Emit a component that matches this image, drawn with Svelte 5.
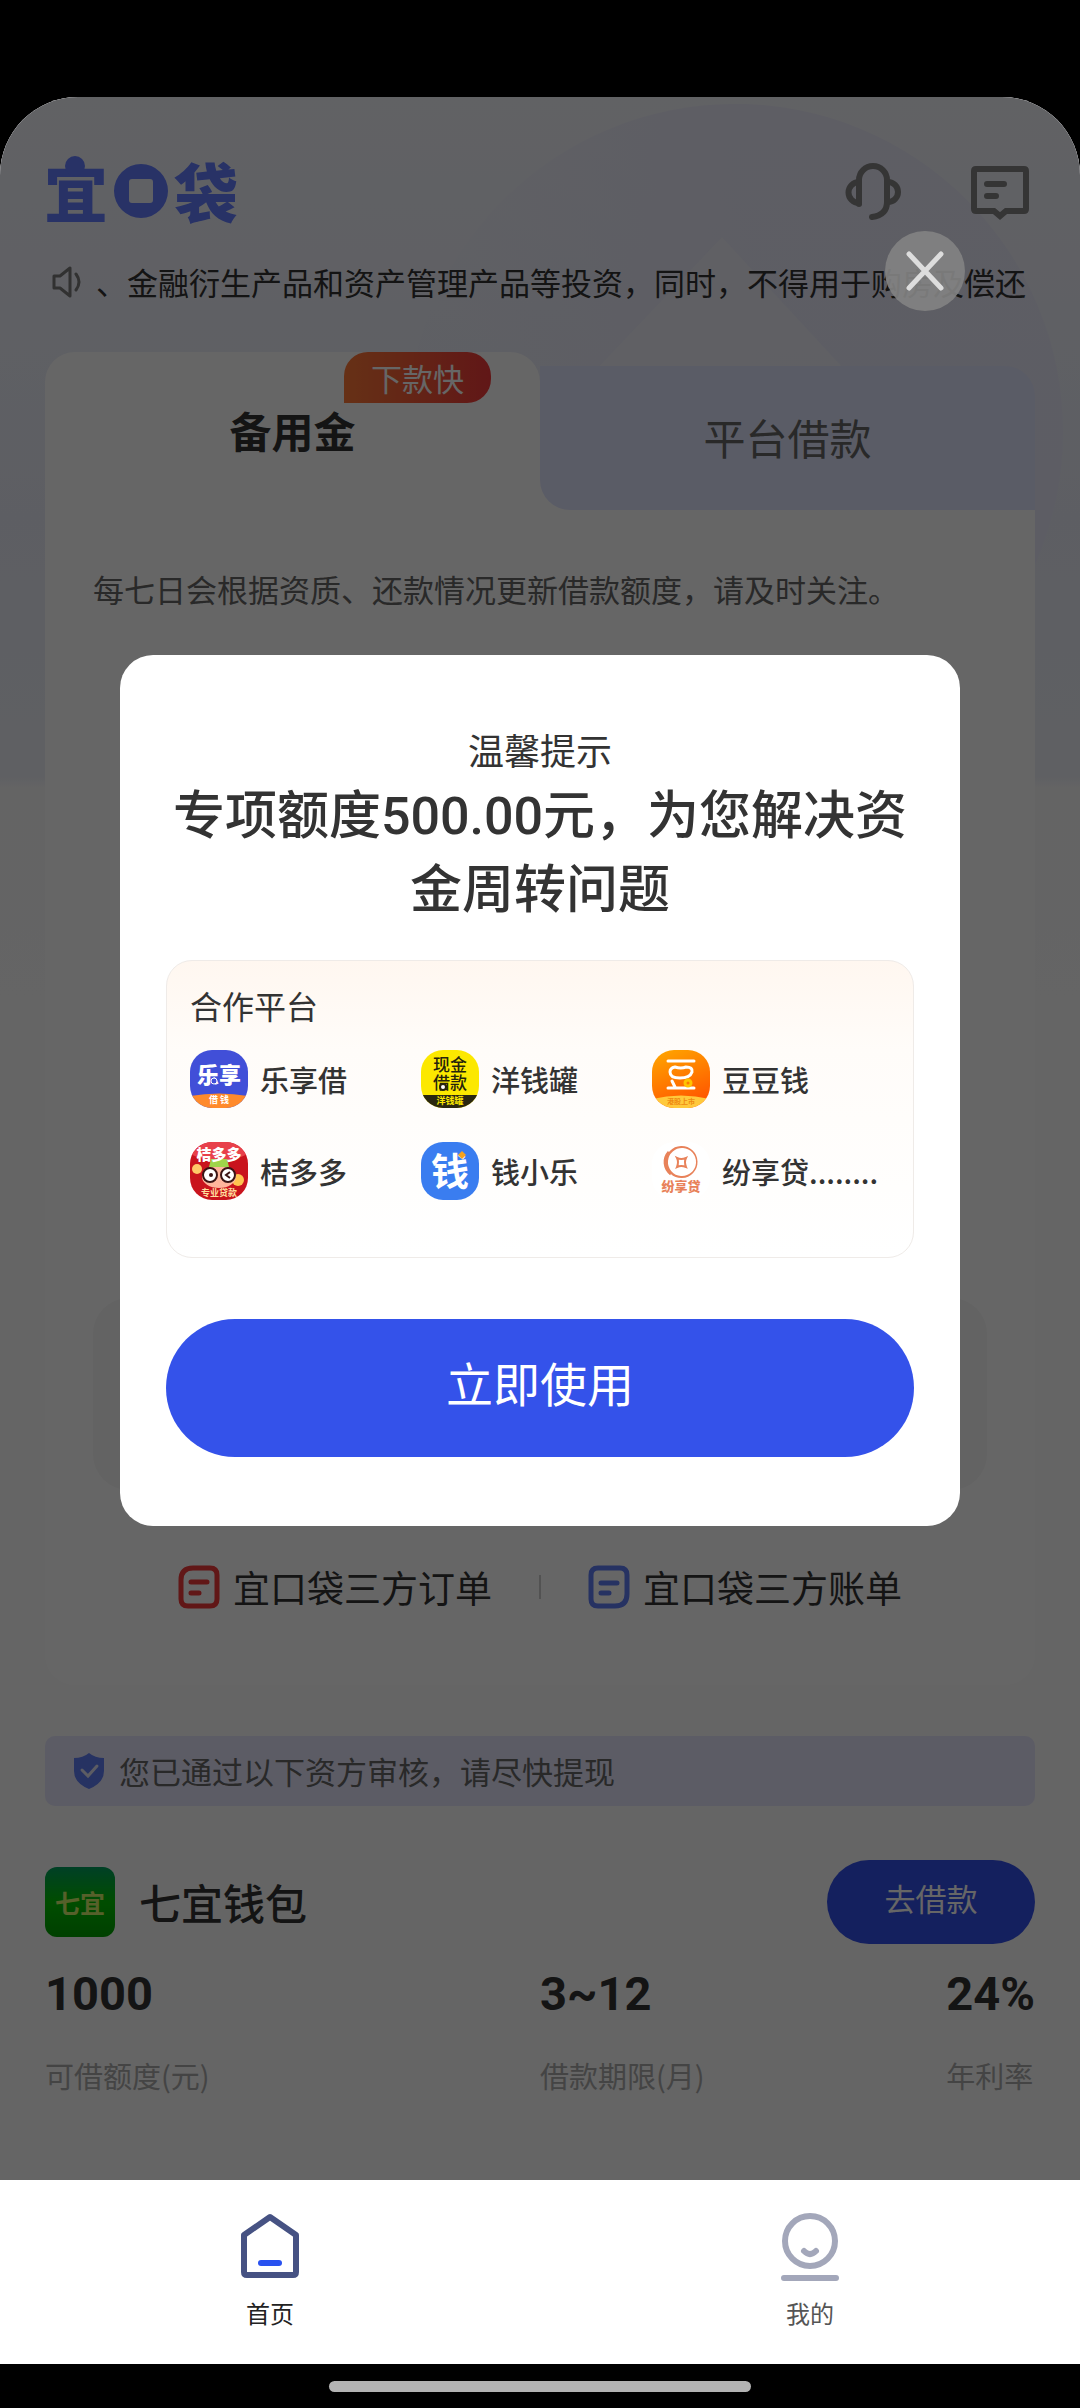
<script lang="ts">
	interface Stat {
		value: string;
		label: string;
	}

	const partners = [
		{ id: 'lexiang', name: '乐享借' },
		{ id: 'yangqian', name: '洋钱罐' },
		{ id: 'doudou', name: '豆豆钱' },
		{ id: 'jieduo', name: '桔多多' },
		{ id: 'xiaole', name: '钱小乐' },
		{ id: 'fenxiang', name: '纷享贷........' }
	];

	const stats: Stat[] = [
		{ value: '1000', label: '可借额度(元)' },
		{ value: '3~12', label: '借款期限(月)' },
		{ value: '24%', label: '年利率' }
	];

	let showDialog = $state(true);
	let activeTab = $state('reserve');

	function closeDialog() {
		showDialog = false;
	}
</script>

<div class="phone">
	<div class="screen">
		<main class="content">
			<svg class="backdrop" viewBox="0 0 1080 700" aria-hidden="true">
				<defs>
					<linearGradient id="halo" x1="0" y1="0.2" x2="1" y2="0">
						<stop offset="0" stop-color="#e8e8fa" stop-opacity="0.1" />
						<stop offset="0.5" stop-color="#e8e8fa" stop-opacity="0.8" />
						<stop offset="1" stop-color="#e8e8fa" stop-opacity="0.8" />
					</linearGradient>
				</defs>
				<circle cx="735" cy="335" r="328" fill="url(#halo)" />
				<path d="M722 140 870 300H570z" fill="#f1f2f9" fill-opacity="0.7" />
			</svg>

			<header class="header">
				<svg class="logo" viewBox="0 0 192 70" role="img" aria-label="宜口袋">
					<text class="logo-text" x="-1" y="61">宜</text>
					<circle cx="30" cy="10" r="10" />
					<path d="M96 8a27 27 0 1 0 0 54a27 27 0 1 0 0-54zM87 23h18q3 0 3 3v18q0 3-3 3H87q-3 0-3-3V26q0-3 3-3z" fill-rule="evenodd" />
					<text class="logo-text" x="129" y="61">袋</text>
				</svg>
				<div class="header-actions">
					<button type="button" class="icon-btn" aria-label="客服">
						<svg width="58" height="58" viewBox="0 0 58 58">
							<path d="M14 42V18a14 14 0 0 1 28 0v22q0 13-15 15" />
							<path d="M14 20a10 10 0 0 0 0 21M43 20a10 10 0 0 1 0 20" />
						</svg>
					</button>
					<button type="button" class="icon-btn" aria-label="消息">
						<svg width="58" height="58" viewBox="0 0 58 58">
							<path d="M5 7h48q2 0 2 2v38q0 2-2 2H35l-6 5-6-5H5q-2 0-2-2V9q0-2 2-2zM16 22h17M16 34h9" />
						</svg>
					</button>
				</div>
			</header>

			<div class="marquee">
				<svg width="32" height="32" viewBox="0 0 32 32" aria-hidden="true">
					<path d="M2 10h6l10-8v28l-10-8H2zM24 8q6 8 0 16" />
				</svg>
				<p class="marquee-text">、金融衍生产品和资产管理产品等投资，同时，不得用于购房及偿还</p>
			</div>

			<section class="loan-card">
				<div class="tabs">
					<button
						type="button"
						class="tab"
						class:tab-active={activeTab === 'reserve'}
						onclick={() => (activeTab = 'reserve')}
					>
						备用金
						<span class="tab-badge">下款快</span>
					</button>
					<button
						type="button"
						class="tab"
						class:tab-active={activeTab === 'platform'}
						onclick={() => (activeTab = 'platform')}
					>
						平台借款
					</button>
				</div>
				<p class="loan-tip">每七日会根据资质、还款情况更新借款额度，请及时关注。</p>
				<div class="loan-box"></div>
				<div class="loan-links">
					<a href="#orders">
						<svg class="order-icon" width="42" height="44" viewBox="0 0 42 44" aria-hidden="true">
							<path d="M15 3h17q7 0 7 7v24q0 7-7 7H10q-7 0-7-7V15Q3 3 15 3zM13 17h16M13 28h8" />
						</svg>
						宜口袋三方订单
					</a>
					<span class="divider"></span>
					<a href="#bills">
						<svg class="bill-icon" width="42" height="44" viewBox="0 0 42 44" aria-hidden="true">
							<path d="M10 3h22q7 0 7 7v19q0 12-12 12H10q-7 0-7-7V10q0-7 7-7zM13 18h16M13 28h8" />
						</svg>
						宜口袋三方账单
					</a>
				</div>
			</section>

			<div class="notice">
				<svg width="32" height="36" viewBox="0 0 32 36" aria-hidden="true">
					<path d="M16 0Q22 5 31 5V18Q31 30 16 36Q1 30 1 18V5Q10 5 16 0z" fill="#5f7df5" />
					<path d="M9 17l6 6 9-10" fill="none" stroke="#e6e6f8" stroke-width="3" stroke-linecap="round" />
				</svg>
				您已通过以下资方审核，请尽快提现
			</div>

			<section class="product">
				<div class="product-head">
					<span class="product-logo">七宜</span>
					<h2 class="product-name">七宜钱包</h2>
					<button type="button" class="borrow-btn">去借款</button>
				</div>
				<dl class="stats">
					{#each stats as stat}
						<div class="stat">
							<dt>{stat.label}</dt>
							<dd>{stat.value}</dd>
						</div>
					{/each}
				</dl>
			</section>
		</main>

		{#if showDialog}
			<div class="overlay">
				<button type="button" class="close-btn" aria-label="关闭" onclick={closeDialog}>
					<svg width="40" height="40" viewBox="0 0 40 40">
						<path d="M4 3l32 34M36 3L4 37" />
					</svg>
				</button>
				<div class="dialog" role="dialog" aria-modal="true" aria-labelledby="dialog-title">
					<p class="dialog-hint">温馨提示</p>
					<h1 id="dialog-title" class="dialog-title">专项额度500.00元，为您解决资金周转问题</h1>
					<div class="partners">
						<h2 class="partners-title">合作平台</h2>
						<ul class="partner-list">
							{#each partners as partner}
								<li class="partner">
									<svg class="partner-icon" viewBox="0 0 58 58" aria-hidden="true">
										{#if partner.id === 'lexiang'}
											<rect width="58" height="58" fill="#414fd8" />
											<path d="M0 46Q29 41 58 46V58H0z" fill="#ff8a2b" />
											<text x="29" y="33" font-size="22" font-weight="900" fill="#fff">乐享</text>
											<circle cx="24" cy="31" r="3" fill="#414fd8" stroke="#fff" />
											<text x="29" y="53" font-size="9" font-weight="700" fill="#fff">借 钱</text>
										{:else if partner.id === 'yangqian'}
											<rect width="58" height="58" fill="#fce800" />
											<path d="M0 45H58V58H0z" fill="#2a2710" />
											<text x="29" y="21" font-size="17" font-weight="500" fill="#26230c">现金</text>
											<text x="29" y="39" font-size="17" font-weight="500" fill="#26230c">借款</text>
											<circle cx="22" cy="37" r="3" fill="#fff" stroke="#26230c" stroke-width="2" />
											<text x="29" y="54" font-size="9" font-weight="700" fill="#fce800">洋钱罐</text>
										{:else if partner.id === 'doudou'}
											<defs>
												<linearGradient id="bean" x1="0" y1="0" x2="0.4" y2="1">
													<stop offset="0" stop-color="#ffa800" />
													<stop offset="1" stop-color="#ff5a00" />
												</linearGradient>
											</defs>
											<rect width="58" height="58" fill="url(#bean)" />
											<path d="M0 49Q29 42 58 49V58H0z" fill="#ffc93c" />
											<g fill="none" stroke="#fff" stroke-width="3" stroke-linecap="round">
												<path d="M16 11H42M16 38H42M20 31l3 6" />
												<path d="M23 17q6 2 11 0q7 0 6 5q-2 6-12 6q-10 0-10-6q0-4 5-5z" />
											</g>
											<circle cx="36" cy="33" r="3" fill="#ff7a00" stroke="#ffc400" stroke-width="3" />
											<text x="29" y="54" font-size="7" font-weight="700" fill="#ef8a10">港股上市</text>
										{:else if partner.id === 'jieduo'}
											<rect width="58" height="58" fill="#c9141d" />
											<path d="M0 0H58V12Q29 26 0 12z" fill="#e8404a" />
											<circle cx="7" cy="27" r="5" fill="#ffc968" />
											<circle cx="48" cy="38" r="6" fill="#ffc34f" />
											<ellipse cx="29" cy="35" rx="17" ry="11" fill="#ffb59c" />
											<path d="M21 17h16l2 8H19z" fill="#9fd54a" />
											<g fill="#fff" stroke="#3a1414" stroke-width="2">
												<circle cx="20" cy="33" r="7" />
												<circle cx="38" cy="33" r="7" />
											</g>
											<circle cx="21" cy="33" r="2" fill="#3a1414" />
											<path d="M40 30l-4 3 4 3" fill="none" stroke="#3a1414" stroke-width="2" />
											<text x="29" y="18" font-size="15" font-weight="900" fill="#fff">桔多多</text>
											<text x="29" y="54" font-size="9" font-weight="700" fill="#ffdf9e">专业贷款</text>
										{:else if partner.id === 'xiaole'}
											<rect width="58" height="58" fill="#3a7df0" />
											<text x="29" y="43" font-size="38" font-weight="700" fill="#fff">钱</text>
											<path d="M41 9l4 4-4 4-4-4z" fill="#f7a21c" />
										{:else}
											<rect width="58" height="58" fill="#fff" />
											<path d="M29 4a16 16 0 1 0 1 32a16 16 0 1 0-1-32zM31 6a14 14 0 1 1-2 28a14 14 0 1 1 2-28z" fill="#e8825a" fill-rule="evenodd" />
											<path d="M17 10a15 15 0 0 0 2 22" fill="none" stroke="#e8825a" stroke-width="3" />
											<path d="M25 16q4 2 9 0q-2 4 0 9q-5-2-9 0q2-5 0-9z" fill="none" stroke="#e8825a" stroke-width="2" />
											<text x="29" y="49" font-size="13" font-weight="900" fill="#e8825a">纷享贷</text>
										{/if}
									</svg>
									<span>{partner.name}</span>
								</li>
							{/each}
						</ul>
					</div>
					<button type="button" class="use-btn" onclick={closeDialog}>立即使用</button>
				</div>
			</div>
		{/if}
	</div>

	<nav class="tabbar">
		<a href="#home" class="tabbar-item tabbar-active">
			<svg width="64" height="72" viewBox="0 0 64 72" aria-hidden="true">
				<path d="M32 8L58 26V63q0 3-3 3H9q-3 0-3-3V26z" fill="none" stroke="#465283" stroke-width="6" stroke-linejoin="round" />
				<path d="M23 54H41" stroke="#2952f0" stroke-width="6" stroke-linecap="round" />
			</svg>
			首页
		</a>
		<a href="#mine" class="tabbar-item">
			<svg width="64" height="72" viewBox="0 0 64 72" fill="none" stroke="#a3a7ba" stroke-width="6" stroke-linecap="round" aria-hidden="true">
				<circle cx="32" cy="32" r="25" />
				<path d="M26 42q6 6 12 0M6 69H58" />
			</svg>
			我的
		</a>
	</nav>
	<div class="home-bar"><span></span></div>
</div>

<style>
	:global(body) {
		margin: 0;
		background: #000;
	}

	.phone {
		padding-top: 97px;
		background: #000;
		font-family: 'Noto Sans CJK SC', sans-serif;
		color: #333;
	}

	button {
		padding: 0;
		border: none;
		background: none;
		font-family: inherit;
		cursor: pointer;
	}

	a {
		color: inherit;
		text-decoration: none;
	}

	h1,
	h2,
	p,
	dl,
	dd,
	ul {
		margin: 0;
		padding: 0;
	}

	.screen {
		position: relative;
		overflow: hidden;
		border-radius: 78px 78px 0 0;
		background: #fff;
	}

	.content {
		position: relative;
		padding: 56px 45px 84px;
		background: linear-gradient(#f3f4fa, #e9ecf8 420px, #eef0f7 680px, #f9f9fb 690px, #fcfcfc 900px);
	}

	.backdrop {
		position: absolute;
		top: 0;
		left: 0;
		width: 100%;
	}

	.header,
	.marquee,
	.loan-card {
		position: relative;
	}

	.header {
		display: flex;
		justify-content: space-between;
		align-items: center;
		height: 76px;
	}

	.logo {
		overflow: visible;
		width: 192px;
		height: 70px;
		fill: #647dff;
	}

	.logo-text {
		font-size: 64px;
		font-weight: 900;
	}

	.header-actions {
		display: flex;
		gap: 68px;
		margin-right: 6px;
	}

	.icon-btn {
		display: flex;
	}

	.icon-btn path {
		fill: none;
		stroke: #858585;
		stroke-width: 6;
		stroke-linecap: round;
	}

	.marquee {
		display: flex;
		align-items: center;
		gap: 12px;
		height: 48px;
		margin: 29px 5px 0 7px;
	}

	.marquee svg {
		flex: none;
	}

	.marquee path {
		fill: none;
		stroke: #7a7a7a;
		stroke-width: 3;
		stroke-linejoin: round;
		stroke-linecap: round;
	}

	.marquee-text {
		flex: 1;
		overflow: hidden;
		white-space: nowrap;
		font-size: 31px;
		line-height: 48px;
	}

	/* white starts below the rounded tab corners */
	.loan-card {
		margin-top: 46px;
		padding-bottom: 70px;
		border-radius: 30px;
		background: linear-gradient(transparent 60px, #fff 60px);
	}

	.tabs {
		display: flex;
		align-items: flex-end;
		height: 158px;
	}

	.tab {
		position: relative;
		flex: 1;
		height: 144px;
		padding-bottom: 4px;
		border-radius: 0 30px 0 30px;
		background: #e2e6fe;
		color: #666;
		font-size: 42px;
	}

	.tab-active {
		height: 158px;
		border-radius: 30px 30px 0 0;
		background: #fff;
		color: #333;
		font-weight: 700;
	}

	.tab-badge {
		position: absolute;
		top: 0;
		right: 49px;
		padding: 0 27px;
		border-radius: 24px 24px 24px 0;
		background: linear-gradient(90deg, #ff7a38, #f23a3a);
		color: #fff;
		font-size: 31px;
		font-weight: 400;
		line-height: 51px;
	}

	.loan-tip {
		padding: 55px 48px 0;
		color: #666;
		font-size: 31px;
		line-height: 48px;
	}

	.loan-box {
		height: 192px;
		margin: 685px 48px 0;
		border-radius: 36px;
		background: #f7f7f7;
	}

	.loan-links {
		display: flex;
		justify-content: center;
		align-items: center;
		margin-top: 69px;
		gap: 47px;
		font-size: 37px;
		line-height: 56px;
	}

	.loan-links a {
		display: flex;
		align-items: center;
		gap: 13px;
	}

	.loan-links path {
		fill: none;
		stroke-width: 5;
		stroke-linecap: round;
	}

	.order-icon {
		stroke: #f23a3a;
	}

	.bill-icon {
		stroke: #5f7df5;
	}

	.divider {
		width: 2px;
		height: 24px;
		background: #ccc;
	}

	.notice {
		display: flex;
		align-items: center;
		gap: 14px;
		margin-top: 51px;
		padding: 0 28px;
		border-radius: 10px;
		background: #e6e6fc;
		color: #666;
		font-size: 31px;
		line-height: 70px;
	}

	.product {
		margin-top: 54px;
	}

	.product-head {
		display: flex;
		align-items: center;
		gap: 24px;
	}

	.product-logo {
		width: 70px;
		border-radius: 12px;
		background: linear-gradient(#00a060, #00c000 50%, #00a000);
		color: #d8f06c;
		font-size: 25px;
		font-weight: 700;
		line-height: 70px;
		text-align: center;
	}

	.product-name {
		flex: 1;
		font-size: 42px;
		font-weight: 500;
		line-height: 60px;
	}

	.borrow-btn {
		width: 208px;
		padding-bottom: 8px;
		border-radius: 42px;
		background: #3450ea;
		color: #fff;
		font-size: 31px;
		line-height: 76px;
	}

	.stats {
		display: grid;
		grid-template-columns: 50% 1fr auto;
		margin-top: 18px;
	}

	.stat {
		display: flex;
		flex-direction: column-reverse;
		gap: 28px;
	}

	.stat dt {
		color: #aaa;
		font-size: 29px;
		line-height: 42px;
	}

	.stat dd {
		font-family: Roboto, sans-serif;
		font-size: 47px;
		font-weight: 700;
		line-height: 64px;
	}

	.overlay {
		position: absolute;
		inset: 0;
		display: flex;
		justify-content: center;
		align-items: flex-start;
		padding: 558px 120px 0;
		background: rgba(0, 0, 0, 0.6);
	}

	.close-btn {
		position: absolute;
		top: 134px;
		right: 115px;
		display: flex;
		justify-content: center;
		align-items: center;
		width: 80px;
		height: 80px;
		border-radius: 50%;
		background: rgba(130, 130, 130, 0.92);
	}

	.close-btn path {
		fill: none;
		stroke: #ddd;
		stroke-width: 5;
		stroke-linecap: round;
	}

	.dialog {
		width: 100%;
		padding: 67px 46px 69px;
		border-radius: 33px;
		background: #fff;
		text-align: center;
	}

	.dialog-hint {
		font-size: 36px;
		line-height: 54px;
	}

	.dialog-title {
		margin-top: 4px;
		font-family: Roboto, 'Noto Sans CJK SC', sans-serif;
		font-size: 52px;
		font-weight: 500;
		line-height: 74px;
	}

	.partners {
		margin-top: 32px;
		padding: 20px 30px 57px 23px;
		border: 1px solid #efebe8;
		border-radius: 26px;
		background: linear-gradient(#fff7f0, #fffcf9 30%, #fff);
		text-align: left;
	}

	.partners-title {
		font-size: 32px;
		font-weight: 400;
		line-height: 48px;
	}

	.partner-list {
		display: grid;
		grid-template-columns: repeat(3, 1fr);
		row-gap: 34px;
		margin-top: 21px;
		list-style: none;
	}

	.partner {
		display: flex;
		align-items: center;
		gap: 12px;
		font-size: 29px;
		font-weight: 500;
		line-height: 56px;
		white-space: nowrap;
	}

	.partner-icon {
		flex: none;
		width: 58px;
		height: 58px;
		border-radius: 22px;
		text-anchor: middle;
	}

	.use-btn {
		width: 100%;
		margin-top: 61px;
		padding-bottom: 12px;
		border-radius: 69px;
		background: #3452ea;
		color: #fff;
		font-size: 47px;
		line-height: 126px;
	}

	.tabbar {
		display: flex;
		padding: 29px 0 33px;
		background: #fff;
	}

	.tabbar-item {
		flex: 1;
		display: flex;
		flex-direction: column;
		align-items: center;
		gap: 14px;
		color: #555;
		font-size: 24px;
		line-height: 36px;
	}

	.tabbar-active {
		color: #222;
	}

	.home-bar {
		display: flex;
		justify-content: center;
		padding: 17px 0 16px;
	}

	.home-bar span {
		width: 39%;
		height: 11px;
		border-radius: 6px;
		background: #b3b3b3;
	}
</style>
